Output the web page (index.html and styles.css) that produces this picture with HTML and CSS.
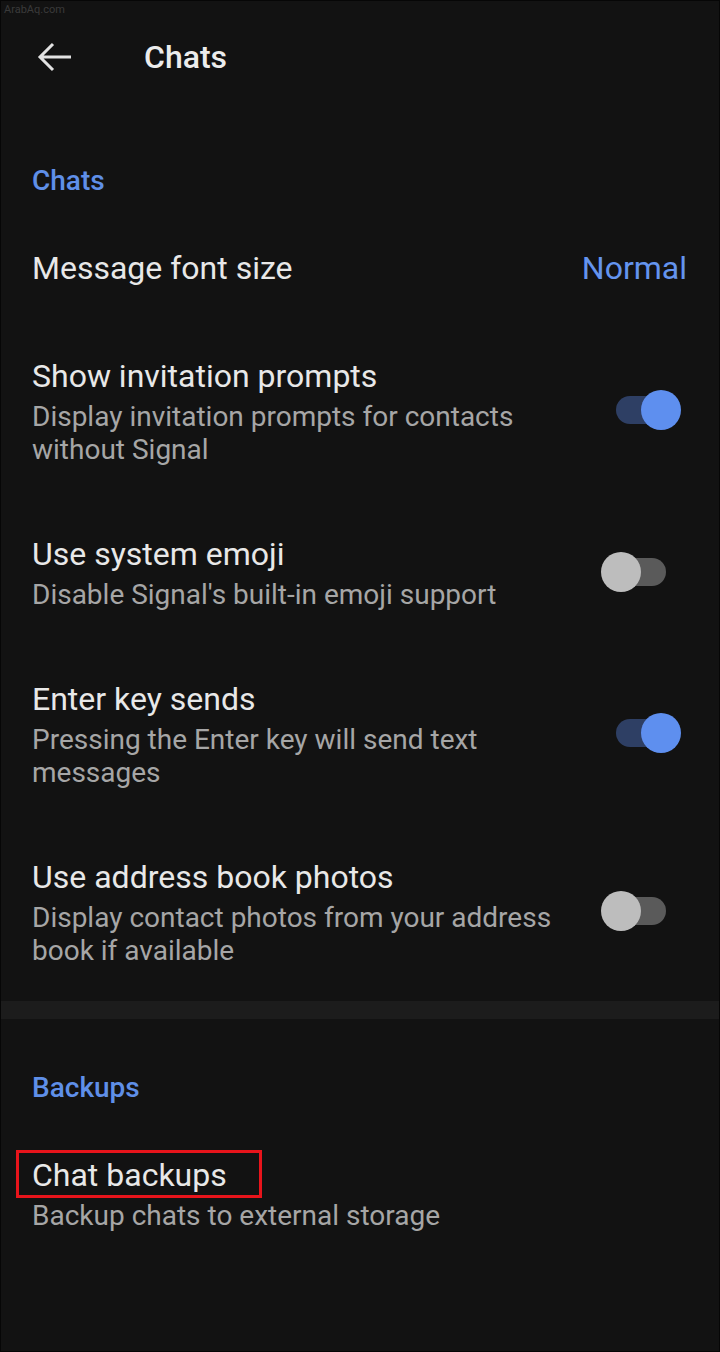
FILE: index.html
```html
<!DOCTYPE html>
<html lang="en">
<head>
	<meta charset="UTF-8">
	<meta content="width=device-width, initial-scale=1.0" name="viewport"/>
	<title>Chats</title>
	<link rel="stylesheet" href="styles.css">
</head>
<body>
<div class="app">
	<div class="wm">ArabAq.com</div>
	<div class="bar">
		<svg class="back" width="36" height="34" viewBox="0 0 36 34">
			<path d="M35 17H4M17 4L4 17l13 13" fill="none" stroke="#e2e2e2" stroke-width="3"/>
		</svg>
		<div class="ttl">Chats</div>
	</div>

	<div class="sec">Chats</div>
	<div class="row">
		<div class="txt"><div class="main">Message font size</div></div>
		<div class="val">Normal</div>
	</div>
	<div class="row">
		<div class="txt">
			<div class="main">Show invitation prompts</div>
			<div class="sub">Display invitation prompts for contacts without Signal</div>
		</div>
		<div class="sw on"><span class="thumb"></span></div>
	</div>
	<div class="row">
		<div class="txt">
			<div class="main">Use system emoji</div>
			<div class="sub">Disable Signal's built-in emoji support</div>
		</div>
		<div class="sw"><span class="thumb"></span></div>
	</div>
	<div class="row">
		<div class="txt">
			<div class="main">Enter key sends</div>
			<div class="sub">Pressing the Enter key will send text messages</div>
		</div>
		<div class="sw on"><span class="thumb"></span></div>
	</div>
	<div class="row">
		<div class="txt">
			<div class="main">Use address book photos</div>
			<div class="sub">Display contact photos from your address book if available</div>
		</div>
		<div class="sw"><span class="thumb"></span></div>
	</div>

	<div class="gap"></div>

	<div class="sec">Backups</div>
	<div class="row">
		<div class="txt">
			<div class="main"><span class="mark">Chat backups</span></div>
			<div class="sub">Backup chats to external storage</div>
		</div>
	</div>
</div>
</body>
</html>
```

FILE: styles.css
```css
body {
	margin: 0;
	background: #121212;
	font-family: Roboto, "Noto Sans", sans-serif;
}
.app {
	position: relative;
	height: 1352px;
	box-sizing: border-box;
	border: 1px solid #060606;
	background: #121212;
	overflow: hidden;
}
.wm {
	position: absolute;
	top: 2px;
	left: 3px;
	font-size: 11px;
	color: #3a3a3a;
}
.bar {
	display: flex;
	align-items: center;
	height: 111px;
	padding-left: 35px;
}
.back {
	display: block;
}
.ttl {
	margin-left: 72px;
	font-size: 32px;
	font-weight: 500;
	color: #ececec;
}
.sec {
	padding: 53px 33px 17px 31px;
	line-height: 32px;
	font-size: 28px;
	font-weight: 500;
	color: #5f8fe8;
}
.row {
	display: flex;
	align-items: center;
	padding: 34px 32px 34px 31px;
}
.txt {
	flex: 1;
}
.main {
	font-size: 32px;
	line-height: 40px;
	color: #e8e8e8;
}
.sub {
	margin-top: 4px;
	font-size: 28px;
	line-height: 33px;
	color: #a6a6a6;
}
.val {
	font-size: 32px;
	line-height: 40px;
	color: #6494ee;
}
.sw {
	position: relative;
	top: -1px;
	width: 50px;
	height: 28px;
	margin: 0 21px 0 39px;
	border-radius: 14px;
	background: #5a5a5a;
}
.sw .thumb {
	position: absolute;
	top: -6px;
	left: -15px;
	width: 40px;
	height: 40px;
	border-radius: 50%;
	background: #bdbdbd;
}
.sw.on {
	background: #2e3f64;
}
.sw.on .thumb {
	left: 25px;
	background: #5e8fef;
}
.gap {
	height: 18px;
	margin-top: 0;
	background: #1c1c1c;
}
.mark {
	position: relative;
}
.mark::after {
	content: "";
	position: absolute;
	left: -16px;
	right: -35px;
	top: -6px;
	bottom: -4px;
	border: 3px solid #e8141b;
}
```
